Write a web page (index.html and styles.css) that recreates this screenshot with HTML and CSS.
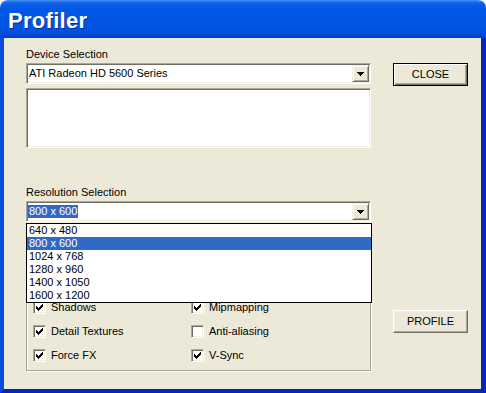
FILE: index.html
```html
<!DOCTYPE html>
<html>
<head>
<meta charset="utf-8">
<link rel="stylesheet" href="styles.css">
</head>
<body>
<div class="window">
  <div class="titlebar"><span class="title">Profiler</span></div>
  <div class="frame">
    <div class="left">
      <div class="lbl">Device Selection</div>
      <div class="combo">
        <span class="combo-text">ATI Radeon HD 5600 Series</span>
        <span class="drop-btn"><svg width="7" height="4" viewBox="0 0 7 4" shape-rendering="crispEdges"><path d="M0 0h7v1h-1v1h-1v1h-1v1h-1v-1h-1v-1h-1v-1h-1z" fill="#000"/></svg></span>
      </div>
      <div class="listbox"></div>
      <div class="lbl lbl-res">Resolution Selection</div>
      <div class="combo">
        <span class="combo-text combo-sel">800 x 600</span>
        <span class="drop-btn"><svg width="7" height="4" viewBox="0 0 7 4" shape-rendering="crispEdges"><path d="M0 0h7v1h-1v1h-1v1h-1v1h-1v-1h-1v-1h-1v-1h-1z" fill="#000"/></svg></span>
        <div class="droplist">
          <div class="opt">640 x 480</div>
          <div class="opt opt-sel">800 x 600</div>
          <div class="opt">1024 x 768</div>
          <div class="opt">1280 x 960</div>
          <div class="opt">1400 x 1050</div>
          <div class="opt">1600 x 1200</div>
        </div>
      </div>
      <div class="group">
        <div class="chk"><span class="box"><svg width="7" height="7" viewBox="0 0 7 7" shape-rendering="crispEdges"><path d="M6 0h1v3h-1v1h-1v1h-1v1h-1v1h-1v-1h-1v-1h-1v-3h1v1h1v1h1v-1h1v-1h1v-1h1z" fill="#000"/></svg></span><span>Shadows</span></div>
        <div class="chk"><span class="box"><svg width="7" height="7" viewBox="0 0 7 7" shape-rendering="crispEdges"><path d="M6 0h1v3h-1v1h-1v1h-1v1h-1v1h-1v-1h-1v-1h-1v-3h1v1h1v1h1v-1h1v-1h1v-1h1z" fill="#000"/></svg></span><span>Mipmapping</span></div>
        <div class="chk"><span class="box"><svg width="7" height="7" viewBox="0 0 7 7" shape-rendering="crispEdges"><path d="M6 0h1v3h-1v1h-1v1h-1v1h-1v1h-1v-1h-1v-1h-1v-3h1v1h1v1h1v-1h1v-1h1v-1h1z" fill="#000"/></svg></span><span>Detail Textures</span></div>
        <div class="chk"><span class="box"></span><span>Anti-aliasing</span></div>
        <div class="chk"><span class="box"><svg width="7" height="7" viewBox="0 0 7 7" shape-rendering="crispEdges"><path d="M6 0h1v3h-1v1h-1v1h-1v1h-1v1h-1v-1h-1v-1h-1v-3h1v1h1v1h1v-1h1v-1h1v-1h1z" fill="#000"/></svg></span><span>Force FX</span></div>
        <div class="chk"><span class="box"><svg width="7" height="7" viewBox="0 0 7 7" shape-rendering="crispEdges"><path d="M6 0h1v3h-1v1h-1v1h-1v1h-1v1h-1v-1h-1v-1h-1v-3h1v1h1v1h1v-1h1v-1h1v-1h1z" fill="#000"/></svg></span><span>V-Sync</span></div>
      </div>
    </div>
    <div class="right">
      <div class="btn btn-default btn-close">CLOSE</div>
      <div class="btn btn-profile">PROFILE</div>
    </div>
  </div>
</div>
</body>
</html>
```
FILE: styles.css
```css
html, body {
  margin: 0;
  padding: 0;
  background: #ffffff;
}
body {
  font-family: "Liberation Sans", Arial, sans-serif;
  font-size: 11px;
  color: #000;
}
.window {
  width: 486px;
  height: 393px;
  display: flex;
  flex-direction: column;
}
.titlebar {
  height: 38px;
  flex: none;
  box-sizing: border-box;
  border-radius: 8px 8px 0 0;
  padding: 10px 0 0 8px;
  background: linear-gradient(to bottom, #4A94F8 0px, #1E6FEE 2px, #0A5DE6 4px, #0057E5 10px, #0055E5 20px, #0053E2 30px, #0048D6 35px, #0040CC 38px);
}
.title {
  font-family: "Liberation Sans", Arial, sans-serif;
  font-weight: bold;
  font-size: 22px;
  line-height: 22px;
  letter-spacing: 0.3px;
  color: #fff;
  text-shadow: 1px 1px 0 #0A2A9A;
}
.frame {
  flex: 1;
  display: flex;
  gap: 22px;
  background: #ECE9D8;
  border-left: 4px solid #0B4BE0;
  border-right: 5px solid #0029BA;
  border-bottom: 4px solid #0029BA;
  padding: 10px 0 0 22px;
}
.left {
  width: 345px;
  display: flex;
  flex-direction: column;
}
.lbl {
  height: 13px;
  line-height: 13px;
  margin-bottom: 2px;
}
.lbl-res {
  margin-top: 38px;
}
.combo {
  position: relative;
  height: 21px;
  box-sizing: border-box;
  display: flex;
  align-items: flex-start;
  justify-content: space-between;
  background: #fff;
  border: 1px solid;
  border-color: #ACA899 #FFFFFF #FFFFFF #ACA899;
  box-shadow: inset 1px 1px 0 #716F64, inset -1px -1px 0 #F1EFE2;
  padding: 0 1px 0 1px;
}
.combo-text {
  margin-top: 3px;
  line-height: 13px;
  padding: 0 1px;
}
.combo-sel {
  background: #316AC5;
  color: #fff;
}
.drop-btn {
  width: 17px;
  height: 17px;
  margin-top: 1px;
  margin-right: 0;
  box-sizing: border-box;
  display: flex;
  align-items: center;
  justify-content: center;
  padding-top: 1px;
  background: #ECE9D8;
  border: 1px solid;
  border-color: #F1EFE2 #716F64 #716F64 #F1EFE2;
  box-shadow: inset 1px 1px 0 #fff, inset -1px -1px 0 #ACA899;
}
.listbox {
  margin-top: 4px;
  height: 60px;
  box-sizing: border-box;
  background: #fff;
  border: 1px solid;
  border-color: #ACA899 #FFFFFF #FFFFFF #ACA899;
  box-shadow: inset 1px 1px 0 #716F64, inset -1px -1px 0 #F1EFE2;
}
.droplist {
  position: absolute;
  top: 21px;
  left: -1px;
  width: 346px;
  box-sizing: border-box;
  background: #fff;
  border: 1px solid #000;
  z-index: 5;
}
.opt {
  height: 13px;
  line-height: 13px;
  padding-left: 2px;
}
.opt-sel {
  background: #316AC5;
  color: #fff;
}
.group {
  margin-top: 61px;
  box-sizing: border-box;
  width: 345px;
  border: 1px solid #ACA899;
  box-shadow: 1px 1px 0 #fff, inset 1px 1px 0 #fff;
  padding: 17px 0 8px 6px;
  display: grid;
  grid-template-columns: 158px auto;
  row-gap: 11px;
}
.chk {
  display: flex;
  align-items: flex-start;
  gap: 5px;
  line-height: 13px;
  height: 13px;
}
.box {
  width: 13px;
  height: 13px;
  box-sizing: border-box;
  flex: none;
  background: #fff;
  border: 1px solid;
  border-color: #ACA899 #FFFFFF #FFFFFF #ACA899;
  box-shadow: inset 1px 1px 0 #716F64, inset -1px -1px 0 #F1EFE2;
  display: flex;
  padding: 2px 0 0 2px;
}
.right {
  width: 75px;
  display: flex;
  flex-direction: column;
}
.btn {
  width: 75px;
  height: 23px;
  box-sizing: border-box;
  background: #ECE9D8;
  display: flex;
  align-items: center;
  justify-content: center;
  line-height: 13px;
  border: 1px solid;
  border-color: #FFFFFF #716F64 #716F64 #FFFFFF;
  box-shadow: inset -1px -1px 0 #ACA899, inset 1px 1px 0 #F1EFE2;
}
.btn-default {
  border: 1px solid #000;
  box-shadow: inset 1px 1px 0 #fff, inset -1px -1px 0 #716F64, inset -2px -2px 0 #ACA899;
}
.btn-close {
  margin-top: 15px;
}
.btn-profile {
  margin-top: 224px;
}
```
